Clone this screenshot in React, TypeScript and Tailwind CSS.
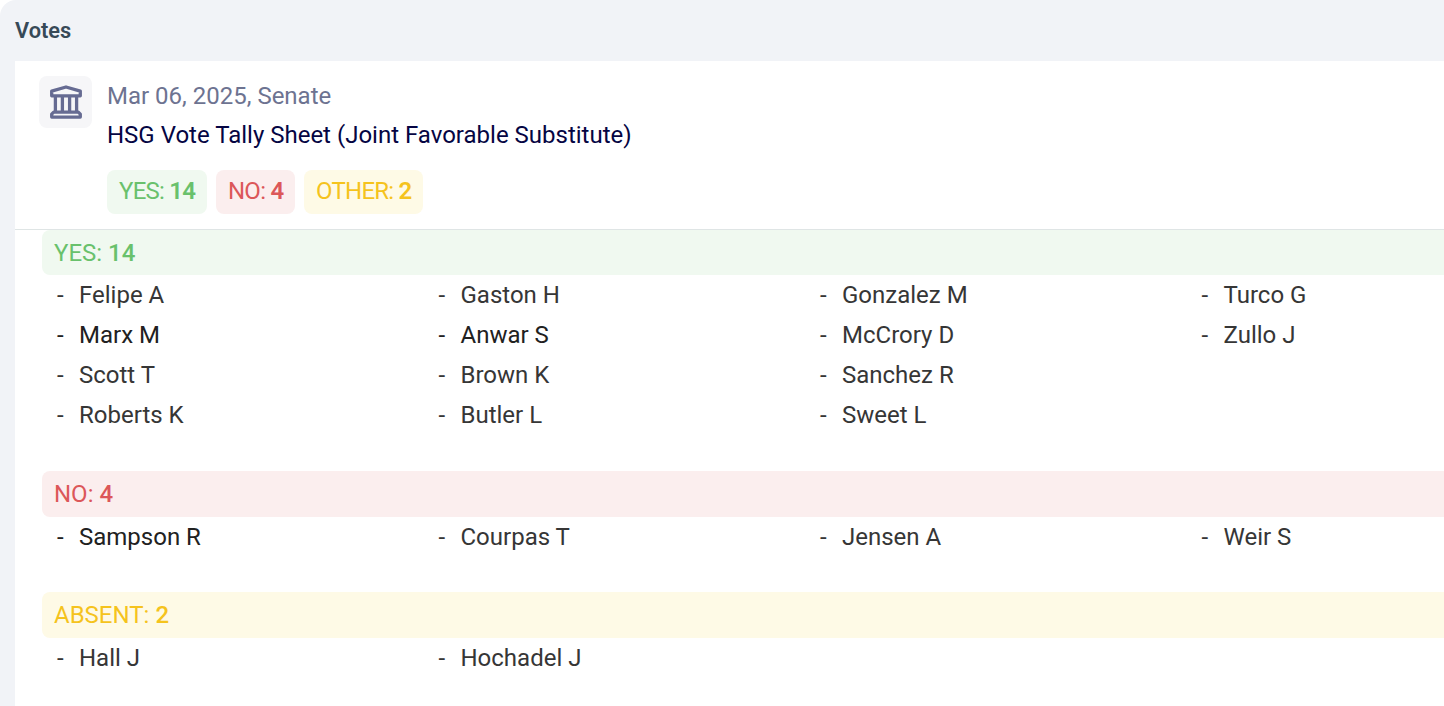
type Voter = { name: string; dark?: boolean };

type VoteGroup = {
  label: string;
  count: number;
  color: string;
  list: string;
  voters: Voter[];
};

const badges = [
  { label: 'YES', count: 14, color: 'w-[100px] bg-[#f0f9f0] text-[#69c16c]' },
  { label: 'NO', count: 4, color: 'w-[79px] bg-[#fbeeee] text-[#dc5759]' },
  { label: 'OTHER', count: 2, color: 'w-[119px] bg-[#fefae6] text-[#f5c31d]' },
];

const groups: VoteGroup[] = [
  {
    label: 'YES',
    count: 14,
    color: 'h-[45px] bg-[#f0f9f0] text-[#69c16c]',
    list: 'grid-flow-col grid-rows-4 mb-9',
    voters: [
      { name: 'Felipe A' },
      { name: 'Marx M', dark: true },
      { name: 'Scott T' },
      { name: 'Roberts K' },
      { name: 'Gaston H' },
      { name: 'Anwar S', dark: true },
      { name: 'Brown K' },
      { name: 'Butler L' },
      { name: 'Gonzalez M' },
      { name: 'McCrory D' },
      { name: 'Sanchez R' },
      { name: 'Sweet L' },
      { name: 'Turco G' },
      { name: 'Zullo J' },
    ],
  },
  {
    label: 'NO',
    count: 4,
    color: 'h-[46px] bg-[#fbeeee] text-[#dc5759]',
    list: 'mb-[35px]',
    voters: [
      { name: 'Sampson R', dark: true },
      { name: 'Courpas T' },
      { name: 'Jensen A' },
      { name: 'Weir S' },
    ],
  },
  {
    label: 'ABSENT',
    count: 2,
    color: 'h-[46px] bg-[#fefae6] text-[#f5c31d]',
    list: '',
    voters: [{ name: 'Hall J' }, { name: 'Hochadel J' }],
  },
];

const SenateIcon = () => (
  <svg
    width="34"
    height="36"
    viewBox="0 0 34 36"
    fill="none"
    stroke="#666b92"
    strokeWidth="3.3"
    strokeLinejoin="round"
  >
    <path d="M2.7 7.2 17 3l14.3 4.2v4.6H2.7z" />
    <path d="M6.4 11.8v16.4M13.4 11.8v16.4M20.6 11.8v16.4M27.6 11.8v16.4" />
    <path d="M4.7 28.2h24.6l2 2v2.9H2.7v-2.9z" />
  </svg>
);

const App = () => {
  return (
    <main className="h-[706px] overflow-hidden rounded-tl-2xl bg-[#f1f3f7] font-['Roboto',sans-serif] text-2xl">
      <h2 className="flex h-[61px] items-center pt-px pl-[15px] text-[21.8px] font-semibold text-[#374957]">
        Votes
      </h2>

      <section className="ml-[15px] h-full bg-white">
        {/* Vote summary */}
        <header className="flex h-[169px] border-b border-[#dfe5e5] pt-[15px] pl-6">
          <div className="flex h-[52px] w-[53px] items-center justify-center rounded-lg bg-[#f6f6f8]">
            <SenateIcon />
          </div>
          <div className="ml-[15px]">
            <p className="h-10 leading-10 text-[#6d7391]">Mar 06, 2025, Senate</p>
            <p className="h-[39px] leading-[38px] text-[#050543]">
              HSG Vote Tally Sheet (Joint Favorable Substitute)
            </p>
            <div className="mt-[15px] flex gap-[9px]">
              {badges.map(({ label, count, color }) => (
                <span
                  key={label}
                  className={`h-11 rounded-lg pl-3 leading-[42px] tracking-[-0.75px] whitespace-nowrap ${color}`}
                >
                  {label}: <b className="font-semibold">{count}</b>
                </span>
              ))}
            </div>
          </div>
        </header>

        {/* Votes by member */}
        <div className="ml-[27px]">
          {groups.map(({ label, count, color, list, voters }) => (
            <section key={label}>
              <h3 className={`rounded-l-lg pl-3 leading-[46px] ${color}`}>
                {label}: <b className="font-medium">{count}</b>
              </h3>
              <ul className={`grid w-[1526px] grid-cols-4 ${list}`}>
                {voters.map(({ name, dark }) => (
                  <li
                    key={name}
                    className={`flex h-10 pl-[15px] leading-10 ${dark ? 'text-[#212121]' : 'text-[#363636]'}`}
                  >
                    <span className="w-[22px]">-</span>
                    {name}
                  </li>
                ))}
              </ul>
            </section>
          ))}
        </div>
      </section>
    </main>
  );
};

export default App;
